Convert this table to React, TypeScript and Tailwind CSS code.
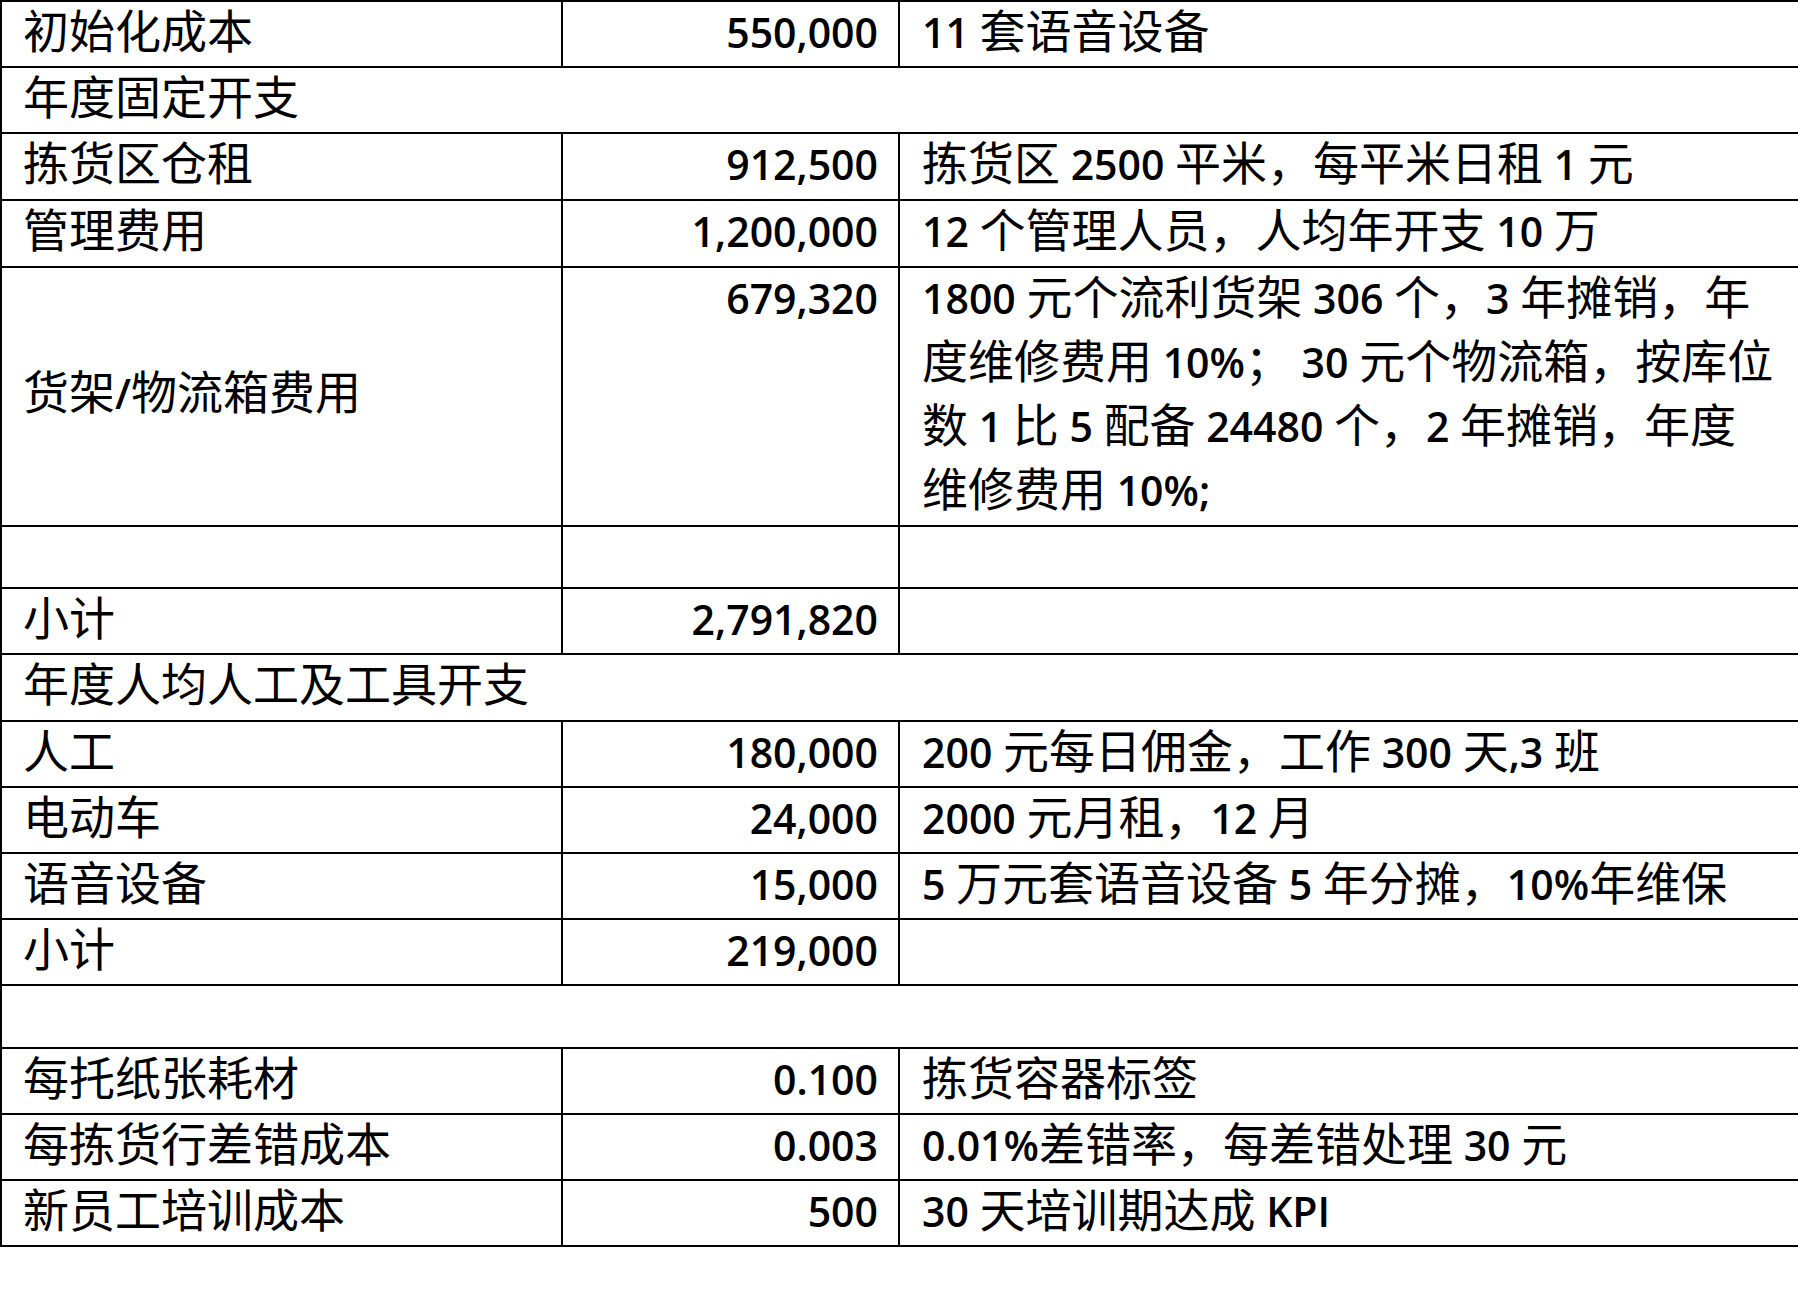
import React from "react";

type Row =
  | { kind: "cells"; h: string; a: string; b: string; c: React.ReactNode; mid?: boolean }
  | { kind: "span"; h: string; text: string };

// latin runs use a narrower face, like the Calibri digits in the source doc
function Txt({ s }: { s: string }) {
  const parts = s.split(/([\x20-\x7E]+)/).filter((p) => p !== "");
  return (
    <>
      {parts.map((p, i) =>
        /[\x20-\x7E]/.test(p) ? (
          <span key={i} className="font-['Open_Sans',sans-serif] text-[41px] leading-none font-semibold whitespace-pre">
            {p}
          </span>
        ) : (
          <span key={i}>{p}</span>
        )
      )}
    </>
  );
}

const multi = (
  <>
    <Txt s="1800 元个流利货架 306 个，3 年摊销，年" />
    <br />
    <Txt s="度维修费用 10%； 30 元个物流箱，按库位" />
    <br />
    <Txt s="数 1 比 5 配备 24480 个，2 年摊销，年度" />
    <br />
    <Txt s="维修费用 10%;" />
  </>
);

const rows: Row[] = [
  { kind: "cells", h: "h-[66px]", a: "初始化成本", b: "550,000", c: <Txt s="11 套语音设备" /> },
  { kind: "span", h: "h-[66px]", text: "年度固定开支" },
  { kind: "cells", h: "h-[67px]", a: "拣货区仓租", b: "912,500", c: <Txt s="拣货区 2500 平米，每平米日租 1 元" /> },
  { kind: "cells", h: "h-[67px]", a: "管理费用", b: "1,200,000", c: <Txt s="12 个管理人员，人均年开支 10 万" /> },
  { kind: "cells", h: "h-[259px]", a: "货架/物流箱费用", b: "679,320", c: multi, mid: true },
  { kind: "cells", h: "h-[62px]", a: "", b: "", c: "" },
  { kind: "cells", h: "h-[66px]", a: "小计", b: "2,791,820", c: "" },
  { kind: "span", h: "h-[67px]", text: "年度人均人工及工具开支" },
  { kind: "cells", h: "h-[66px]", a: "人工", b: "180,000", c: <Txt s="200 元每日佣金，工作 300 天,3 班" /> },
  { kind: "cells", h: "h-[66px]", a: "电动车", b: "24,000", c: <Txt s="2000 元月租，12 月" /> },
  { kind: "cells", h: "h-[66px]", a: "语音设备", b: "15,000", c: <Txt s="5 万元套语音设备 5 年分摊，10%年维保" /> },
  { kind: "cells", h: "h-[66px]", a: "小计", b: "219,000", c: "" },
  { kind: "span", h: "h-[63px]", text: "" },
  { kind: "cells", h: "h-[66px]", a: "每托纸张耗材", b: "0.100", c: <Txt s="拣货容器标签" /> },
  { kind: "cells", h: "h-[66px]", a: "每拣货行差错成本", b: "0.003", c: <Txt s="0.01%差错率，每差错处理 30 元" /> },
  { kind: "cells", h: "h-[66px]", a: "新员工培训成本", b: "500", c: <Txt s="30 天培训期达成 KPI" /> },
];

export default function App() {
  return (
    <div className="h-[1309px] w-[1798px] overflow-hidden bg-white text-black">
      <div className="w-[1840px] border-b-2 border-l-2 border-black font-['Noto_Sans_CJK_SC',sans-serif] text-[46px] leading-[52px]">
        {rows.map((r, i) =>
          r.kind === "span" ? (
            <div key={i} className={`${r.h} border-t-2 border-black pl-[21px] whitespace-nowrap`}>
              <Txt s={r.text} />
            </div>
          ) : (
            <div key={i} className={`${r.h} grid grid-cols-[559px_337px_1fr] border-t-2 border-black`}>
              <div
                className={`flex pl-[21px] whitespace-nowrap ${r.mid ? "items-center pb-[16px]" : "items-start"}`}
              >
                <div>
                  <Txt s={r.a} />
                </div>
              </div>
              <div className="border-l-2 border-black pr-[20px] text-right whitespace-nowrap">
                <Txt s={r.b} />
              </div>
              <div className="border-l-2 border-black pl-[22px] whitespace-nowrap">
                {r.mid ? <div className="-mt-[6px] leading-[64px]">{r.c}</div> : r.c}
              </div>
            </div>
          )
        )}
      </div>
    </div>
  );
}
